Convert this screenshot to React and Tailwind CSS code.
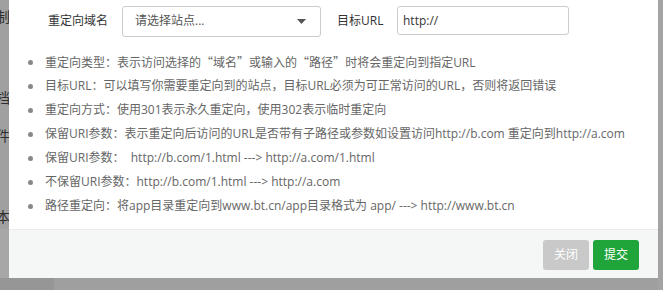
import { useState } from 'react'

const cjk = { fontFamily: '"Noto Sans CJK SC", sans-serif' }

const tips = [
  <>重定向类型：表示访问选择的<span style={cjk}>“</span>域名<span style={cjk}>”</span>或输入的<span style={cjk}>“</span>路径<span style={cjk}>”</span>时将会重定向到指定URL</>,
  '目标URL：可以填写你需要重定向到的站点，目标URL必须为可正常访问的URL，否则将返回错误',
  '重定向方式：使用301表示永久重定向，使用302表示临时重定向',
  '保留URI参数：表示重定向后访问的URL是否带有子路径或参数如设置访问http://b.com 重定向到http://a.com',
  '保留URI参数：  http://b.com/1.html ---> http://a.com/1.html',
  '不保留URI参数：http://b.com/1.html ---> http://a.com',
  '路径重定向：将app目录重定向到www.bt.cn/app目录格式为 app/ ---> http://www.bt.cn',
]

export default function App() {
  const [target, setTarget] = useState('http://')

  return (
    <div
      className="flex w-[663px] h-[290px] overflow-hidden bg-[#a1a1a1] text-[12px]"
      style={{ fontFamily: '"Open Sans", "Noto Sans CJK SC", sans-serif' }}
    >
      {/* page behind the mask */}
      <div className="w-[9px] shrink-0 flex flex-col overflow-hidden">
        <div className="h-[229px] bg-[#a0a0a0] text-[14px] text-[#2e2e2e] leading-none">
          <div className="ml-[-4px] mt-[10px] whitespace-nowrap">制</div>
          <div className="ml-[-4px] mt-[67px] whitespace-nowrap">档</div>
          <div className="ml-[-4px] mt-[24px] whitespace-nowrap">件</div>
          <div className="ml-[-4px] mt-[67px] whitespace-nowrap">本</div>
        </div>
        <div className="h-[49px] bg-[#a7a7a7]"></div>
        <div className="flex-1 bg-[#969696]"></div>
      </div>

      <div className="w-[649px] shrink-0 flex flex-col">
        <div className="h-[278px] flex flex-col bg-white shrink-0">
          <div className="h-[229px] shrink-0">
            <div className="flex items-center h-[41px] pl-[39px]">
              <span className="text-[#333] w-[74px]">重定向域名</span>
              <div className="w-[199px] h-[31px] border border-[#cccccc] rounded-[3px] flex items-center justify-between px-[12px] mt-[1px]">
                <span className="text-[#555]">请选择站点...</span>
                <svg width="9" height="5" viewBox="0 0 9 5" className="mr-[2px]">
                  <path d="M0 0 L9 0 L4.5 5 Z" fill="#555" />
                </svg>
              </div>
              <span className="text-[#333] ml-[16px] w-[60px]">目标URL</span>
              <input
                value={target}
                onChange={e => setTarget(e.target.value)}
                className="w-[172px] h-[29px] border border-[#cccccc] rounded-[3px] px-[5px] text-[#333] outline-none"
              />
            </div>
            <ul className="mt-[9px] pl-[19px]">
              {tips.map((t, i) => (
                <li key={i} className="flex items-center h-[24px] text-[#666] whitespace-pre">
                  <span className="w-[5px] h-[5px] rounded-full bg-[#888] mr-[12px] shrink-0"></span>
                  <span>{t}</span>
                </li>
              ))}
            </ul>
          </div>
          <div className="flex-1 bg-[#f5f6f6] border-t border-[#ebebeb] flex items-center justify-end gap-[4px] pr-[19px] pt-[1px]">
            <button className="w-[46px] h-[30px] rounded-[3px] bg-[#c9c9c9] text-white text-[12px]">关闭</button>
            <button className="w-[46px] h-[30px] rounded-[3px] bg-[#20a53a] text-white text-[12px]">提交</button>
          </div>
        </div>
        <div className="flex-1 flex">
          <div className="w-[45px] bg-[#969696]"></div>
          <div className="flex-1 bg-[#9f9f9f]"></div>
        </div>
      </div>

      <div className="flex-1 bg-[#a3a3a3]"></div>
    </div>
  )
}
